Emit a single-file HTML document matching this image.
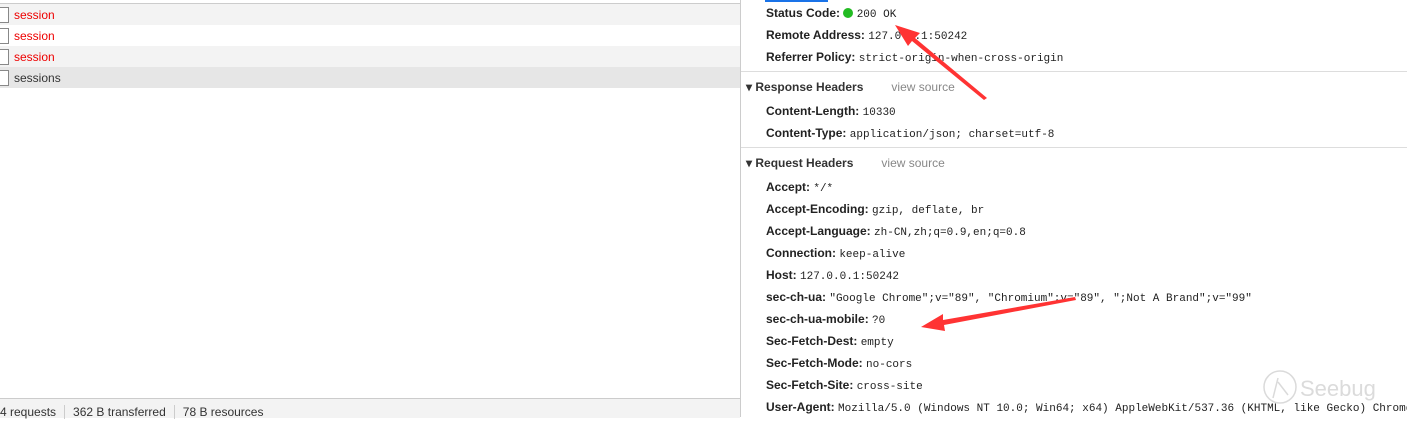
<!DOCTYPE html><html><head><style>
body{margin:0;width:1407px;height:417px;overflow:hidden;background:#fff;font-family:"Liberation Sans",sans-serif;position:relative}
.l{position:absolute;left:0;top:0;width:740px;height:417px;border-right:1px solid #ccc}
.row{position:absolute;left:0;width:740px;height:21px;font-size:12px;line-height:23px}
.row i{position:absolute;left:-4px;top:3px;width:11px;height:14px;border:1px solid #888;background:#fff}
.row span{position:absolute;left:14px}
.foot{position:absolute;left:0;top:398px;width:740px;height:19px;background:#f3f3f3;border-top:1px solid #ccc;font-size:12px;color:#333;line-height:26px}
.foot span{padding:0 8px;border-right:1px solid #ccc}
.k{position:absolute;left:766px;font-size:12px;color:#222;font-weight:bold;white-space:nowrap}
.k m{font-family:"Liberation Mono",monospace;font-weight:normal;font-size:11px;color:#222}
.h{position:absolute;left:746px;font-size:12px;font-weight:bold;color:#333;white-space:nowrap}
.h s{text-decoration:none;font-weight:normal;color:#888;margin-left:28px}
.dv{position:absolute;left:741px;width:666px;height:1px;background:#ddd}
</style></head><body>
<div class="l">
<div style="position:absolute;top:3px;left:0;width:740px;height:1px;background:#ccc"></div>
<div class="row" style="top:4px;background:#f3f3f3;color:#e00"><i></i><span>session</span></div>
<div class="row" style="top:25px;color:#e00"><i></i><span>session</span></div>
<div class="row" style="top:46px;background:#f3f3f3;color:#e00"><i></i><span>session</span></div>
<div class="row" style="top:67px;background:#e6e6e6;color:#333"><i></i><span>sessions</span></div>
<div class="foot"><span style="padding-left:0">4 requests</span><span>362 B transferred</span><span style="border:0">78 B resources</span></div>
</div>
<div style="position:absolute;left:765px;top:0;width:63px;height:2px;background:#1a73e8"></div>
<div class="k" style="top:6px">Status Code: <span style="display:inline-block;width:10px;height:10px;border-radius:50%;background:#2b2;vertical-align:-1px"></span> <m>200 OK</m></div>
<div class="k" style="top:28px">Remote Address: <m>127.0.0.1:50242</m></div>
<div class="k" style="top:50px">Referrer Policy: <m>strict-origin-when-cross-origin</m></div>
<div class="dv" style="top:71px"></div>
<div class="h" style="top:80px">▾ Response Headers<s>view source</s></div>
<div class="k" style="top:104px">Content-Length: <m>10330</m></div>
<div class="k" style="top:126px">Content-Type: <m>application/json; charset=utf-8</m></div>
<div class="dv" style="top:147px"></div>
<div class="h" style="top:156px">▾ Request Headers<s>view source</s></div>
<div class="k" style="top:180px">Accept: <m>*/*</m></div>
<div class="k" style="top:202px">Accept-Encoding: <m>gzip, deflate, br</m></div>
<div class="k" style="top:224px">Accept-Language: <m>zh-CN,zh;q=0.9,en;q=0.8</m></div>
<div class="k" style="top:246px">Connection: <m>keep-alive</m></div>
<div class="k" style="top:268px">Host: <m>127.0.0.1:50242</m></div>
<div class="k" style="top:290px">sec-ch-ua: <m>"Google Chrome";v="89", "Chromium";v="89", ";Not A Brand";v="99"</m></div>
<div class="k" style="top:312px">sec-ch-ua-mobile: <m>?0</m></div>
<div class="k" style="top:334px">Sec-Fetch-Dest: <m>empty</m></div>
<div class="k" style="top:356px">Sec-Fetch-Mode: <m>no-cors</m></div>
<div class="k" style="top:378px">Sec-Fetch-Site: <m>cross-site</m></div>
<div class="k" style="top:400px">User-Agent: <m>Mozilla/5.0 (Windows NT 10.0; Win64; x64) AppleWebKit/537.36 (KHTML, like Gecko) Chrome/89</m></div>
<svg style="position:absolute;left:0;top:0" width="1407" height="417">
<polygon points="987,98 915,38 920,33 895,25 908,46 912,41 984,100" fill="#f33"/>
<polygon points="1075,297 943,320 943,314 921,327 945,331 944,325 1076,300" fill="#f33"/>
<g opacity="0.3" stroke="#888" fill="none" stroke-width="1.5"><circle cx="1280" cy="387" r="16"/><path d="M1278 378 L1273 398 M1278 382 L1288 395"/></g>
<text x="1300" y="396" font-family="Liberation Sans" font-size="22" fill="#ccc" opacity="0.7">Seebug</text>
</svg>
</body></html>
